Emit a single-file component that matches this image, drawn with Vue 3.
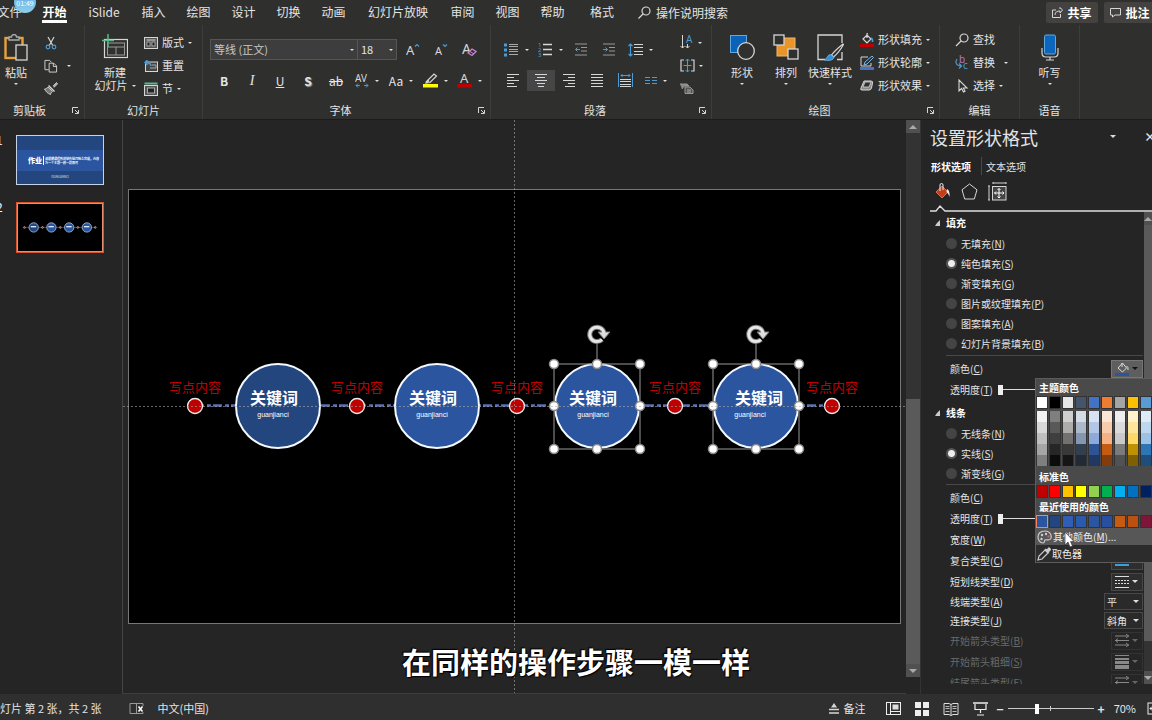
<script setup>
import { h, ref } from 'vue'

const W = '#d6d6d6'
const B = '#4a9bd6'
const glyph = (x, y, size, fill, s) => `<text x="${x}" y="${y}" font-size="${size}" fill="${fill}" font-family="Noto Sans, sans-serif">${s}</text>`
const icons = {
  paste: [24, 27, `<rect x="1.5" y="4" width="17" height="20" fill="none" stroke="#e8a23a" stroke-width="2.4"/><path d="M5 6V3h2.5a2.5 2.5 0 0 1 5 0H15v3z" fill="#30302f" stroke="#aaa" stroke-width="1.3"/><rect x="12" y="11" width="11" height="15" fill="#30302f" stroke="${W}" stroke-width="1.3"/>`],
  cut: [12, 14, `<path d="M3 1l5 9M9 1L4 10" stroke="${W}" fill="none" stroke-width="1.2"/><circle cx="3" cy="11" r="1.8" fill="none" stroke="${B}" stroke-width="1.2"/><circle cx="9" cy="11" r="1.8" fill="none" stroke="${B}" stroke-width="1.2"/>`],
  copy: [15, 14, `<path d="M5 11H1V1h5l2 2" fill="none" stroke="${W}"/><path d="M5.5 4h5l3 3v6.500h-8z" fill="#30302f" stroke="${W}"/><path d="M10 4v3.5h3.5" fill="none" stroke="${W}"/>`],
  brush: [14, 13, `<path d="M9 4l3.5-3.500 1.2 1.2L10 5.5" fill="#aaa" stroke="${W}" stroke-width=".8"/><path d="M5 3l6 6-1 1-6-6z" fill="${W}"/><path d="M4 5c-1 1-2 2-3.500 2 1 2 3 4.500 6 5.500 0-1 1-2 2-3z" fill="#777" stroke="${W}" stroke-width=".9"/>`],
  newslide: [26, 25, `<rect x="2.5" y="5.5" width="23" height="18" fill="#30302f" stroke="${W}" stroke-width="1.2"/><rect x="5.5" y="9" width="17" height="12" fill="none" stroke="#999"/><path d="M5.5 13h17M14 13v8" stroke="#999"/><path d="M0 6.5h12M6 0v13" stroke="#5fb58a" stroke-width="1.5"/>`],
  layout: [14, 12, `<rect x=".5" y=".5" width="13" height="11" fill="#555" stroke="${W}"/><path d="M2.5 3h9" stroke="${W}"/><rect x="3" y="5" width="3" height="4" fill="#222" stroke="#ccc" stroke-width=".7"/><rect x="8" y="5" width="3" height="4" fill="#222" stroke="#ccc" stroke-width=".7"/>`],
  reset: [14, 12, `<rect x="1.5" y="2" width="12" height="9.5" fill="#444" stroke="${W}"/><path d="M6 8h6V5H8" stroke="#aaa" fill="none"/><path d="M7 6C7 3 5 2.500 1 2.500M3.500 0L1 2.500 3.500 5" stroke="${B}" stroke-width="1.5" fill="none"/>`],
  section: [14, 14, `<path d="M.5 1.500h13" stroke="#5fb58a" stroke-width="2"/><rect x=".5" y="3.5" width="13" height="10" fill="#555" stroke="${W}"/><rect x="3.5" y="6" width="7" height="5" fill="#222" stroke="#aaa"/>`],
  grow: [15, 14, glyph(0, 12, 13, W, 'A') + `<path d="M9 3.500l2-2 2 2" stroke="${B}" fill="none" stroke-width="1.2"/>`],
  shrink: [15, 14, glyph(1, 12, 11, W, 'A') + `<path d="M9 1.500l2 2 2-2" stroke="${B}" fill="none" stroke-width="1.2"/>`],
  clear: [15, 15, glyph(0, 12, 14, W, 'A') + `<path d="M6 11l4-4 4 2.500-4 4z" fill="#30302f" stroke="#c583cf" stroke-width="1.3"/><path d="M8 9.500l4 2.500" stroke="#c583cf"/>`],
  spacing: [14, 15, glyph(0, 9, 10, W, 'AV') + `<path d="M1 12.500h4M9 12.500h4M3 10.500l-2 2 2 2M11 10.500l2 2-2 2" stroke="${B}" fill="none"/>`],
  marker: [15, 15, `<path d="M4 8l7-7 2.500 2L7 9.500 3 10z" fill="none" stroke="${W}" stroke-width="1.2"/><path d="M3 9.500l3-2" stroke="${W}" stroke-width="2"/><rect y="11" width="15" height="3.5" fill="#ff0"/>`],
  fcolor: [15, 15, glyph(3, 10, 13, W, 'A') + `<rect y="11" width="15" height="3.5" fill="#c00000"/>`],
  bullets: [15, 14, `<path d="M5 1.500h9M5 6.500h9M5 11.500h9M5 3.500h9M5 8.500h9" stroke="#aaa"/><path d="M0 2h3M0 7h3M0 12h3" stroke="${B}" stroke-width="3"/>`],
  numbers: [15, 15, `<path d="M5 2.500h9M5 7.500h9M5 12.500h9" stroke="${W}" stroke-width="1.3"/>` + glyph(0, 5, 6, B, '1') + glyph(0, 10, 6, B, '2') + glyph(0, 15, 6, B, '3')],
  dedent: [14, 13, `<path d="M1 1h12M7 4.500h6M7 8h6M1 12h12" stroke="#999"/><path d="M6 6.500H1.500M3.500 4.500l-2 2 2 2" stroke="#78909c" fill="none"/>`],
  indent: [14, 13, `<path d="M1 1h12M7 4.500h6M7 8h6M1 12h12" stroke="#999"/><path d="M1 6.500h4.500M3.500 4.500l2 2-2 2" stroke="#78909c" fill="none"/>`],
  lines: [15, 14, `<path d="M6 1.500h9M6 4.500h9M6 8.500h9M6 11.500h9" stroke="${W}"/><path d="M2.500 1v12M.5 3l2-2 2 2M.5 11l2 2 2-2" stroke="${B}" fill="none" stroke-width="1.2"/>`],
  left: [14, 13, `<path d="M1 .5h12M1 3.500h7M1 6.500h12M1 9.500h7M1 12.500h10" stroke="${W}"/>`],
  center: [14, 13, `<path d="M1 .5h12M3 3.500h8M1 6.500h12M3 9.500h8M4 12.500h6" stroke="${W}"/>`],
  right: [14, 13, `<path d="M1 .5h12M6 3.500h7M1 6.500h12M6 9.500h7M3 12.500h10" stroke="${W}"/>`],
  justify: [14, 13, `<path d="M1 .5h12M1 3.500h12M1 6.500h12M1 9.500h12M1 12.500h12" stroke="${W}"/>`],
  distribute: [15, 15, `<path d="M.5 0v14M14.500 0v14M3 2.500h9M4.500 1L3 2.500 4.500 4M10.500 1L12 2.500 10.500 4" stroke="${B}" fill="none"/><path d="M2 6.500h11M2 8.500h11M2 11.500h11M2 13.500h11" stroke="${W}"/>`],
  columns: [12, 10, `<path d="M0 1.500h5M7 1.500h5M0 4.500h5M7 4.500h5M0 7.500h5M7 7.500h5" stroke="${B}"/>`],
  textdir: [14, 15, `<path d="M2.500 0v13M.5 11l2 2 2-2M7.500 9v4M5.500 11l2 2 2-2" stroke="${W}" fill="none"/>` + glyph(6, 8, 10, B, 'A')],
  valign: [15, 13, `<path d="M4 1H1v11h3M11 1h3v11h-3" stroke="${W}" fill="none" stroke-width="1.2"/><path d="M7.500 0v13M3.500 6.500h8M5.500 2l2-2 2 2M5.500 11l2 2 2-2" stroke="${B}" fill="none"/>`],
  smart: [14, 11, `<path d="M0 1h7l2 2H4l-2 3" fill="#888" stroke="#999"/><path d="M5 4h5l3 3v3.500H5z" fill="#555" stroke="#999"/><path d="M7 7h4M7 9h4" stroke="#aaa"/>`],
  shapes: [26, 26, `<rect x="1.5" y="1.5" width="16" height="17" fill="#0a63b8" stroke="#5fa8e0"/><circle cx="17" cy="17" r="8.3" fill="#30302f" stroke="${W}" stroke-width="1.3"/>`],
  arrange: [26, 26, `<rect x="4" y="4" width="18" height="18" fill="#e8962a" stroke="#f2b768"/><rect x="1" y="1" width="10" height="10" fill="#30302f" stroke="${W}" stroke-width="1.3"/><rect x="15" y="15" width="10" height="10" fill="#30302f" stroke="${W}" stroke-width="1.3"/>`],
  quick: [27, 27, `<path d="M8 25.500H1V1h24v8M25 18v7.500h-5" fill="none" stroke="${W}" stroke-width="1.3"/><path d="M26 10c-5 4-10 9-11.500 11l2 2C19 21 24 15 26.500 10.500z" fill="#30302f" stroke="${W}" stroke-width="1.2"/><path d="M13.500 20.500c-3 0-3 4-6 5.500 4 1 9 .5 9.500-3z" fill="#2f8fd8" stroke="#7abdf0" stroke-width=".8"/>`],
  fill: [14, 14, `<path d="M3 6l4-4 4 4-4 4zM7 5V1q0-1 1-1" fill="none" stroke="${W}" stroke-width="1.2"/><path d="M11 5q2 1 1.500 4" stroke="${B}" fill="none" stroke-width="1.5"/><rect y="11" width="14" height="3" fill="#c00000"/>`],
  outline: [14, 14, `<path d="M8 1H1v9h10V7" fill="none" stroke="${W}"/><path d="M4 9l1-3 7-6 1.500 1.500L7 8z" fill="#30302f" stroke="#7ab8e8"/><rect y="11" width="14" height="3" fill="#4472c4"/>`],
  effects: [14, 11, `<path d="M4 1h7q2 0 1.500 2l-1 5q-.5 2-2.500 2H2q-2 0-1-2z" fill="#888" stroke="${W}"/><path d="M5 2h6L9 7H3z" fill="#30302f" stroke="${W}" stroke-width=".8"/>`],
  find: [14, 14, `<circle cx="9" cy="5" r="4" fill="none" stroke="${W}" stroke-width="1.2"/><path d="M6 8l-5 5" stroke="${W}" stroke-width="1.3"/>`],
  replace: [14, 15, glyph(4, 8, 10, '#b57ac5', 'b') + glyph(8, 14, 10, B, 'c') + `<path d="M2 4C0 7 1 11 6 11M4 8.500L6.500 11 4 13.500" stroke="${B}" fill="none" stroke-width="1.2"/>`],
  pick: [14, 14, `<path d="M4 1v11l2.500-2.500L8.500 13l1.500-.8L8.300 9H12z" fill="none" stroke="${W}" stroke-width="1.1"/>`],
  mic: [18, 27, `<rect x="3.5" y="1" width="11" height="19" rx="1.5" fill="#0c66bd" stroke="#5fa8e0"/><path d="M1 14v5q0 4 4 4h8q4 0 4-4v-5M9 23v3M5 26h8" fill="none" stroke="${W}" stroke-width="1.2"/>`],
  launch: [7, 7, `<path d="M.5 6V.5H6" stroke="${W}" fill="none"/><path d="M3 3l3 3M6.500 3v3.500H3" stroke="${W}" fill="none"/>`],
  search: [13, 13, `<circle cx="8" cy="5" r="4" fill="none" stroke="${W}" stroke-width="1.2"/><path d="M5 8l-4.500 4.500" stroke="${W}" stroke-width="1.3"/>`],
  share: [11, 11, `<path d="M4 3H.5v7.500h8V7" fill="none" stroke="${W}"/><path d="M3 8c0-3 2-4 5-4V6l2.500-3L8 .5V2" fill="none" stroke="${W}"/>`],
  comment: [11, 10, `<path d="M.5.5h10v6.500H5L2.500 9V7h-2z" fill="none" stroke="${W}"/>`],
  bucket: [17, 17, `<path d="M2 9l6-6 6 6-6 6z" fill="#c43e1c" stroke="#e8826a" stroke-width=".8"/><path d="M6 8V2q0-1.500 1.500-1.500T9 2v5" fill="none" stroke="#eee"/><path d="M13 6q3 1 2.500 8-.5-3-3-5z" fill="#eee"/>`],
  pentagon: [17, 17, `<path d="M8.500 1L16 6.800 13.300 16H3.700L1 6.800z" fill="none" stroke="${W}"/>`],
  size: [19, 19, `<path d="M1 4v14M0 4h2M0 18h2M5 1h13M5 0v2M18 0v2" stroke="${W}" fill="none"/><rect x="4.5" y="4.5" width="13.5" height="13.5" fill="#444" stroke="${W}"/><path d="M11 6.500v9.500M6.500 11h9.500M9.500 8L11 6.500 12.500 8M9.500 14.500L11 16l1.500-1.500M8 9.500L6.500 11 8 12.500M14.500 9.500L16 11l-1.500 1.500" stroke="#fff" fill="none"/>`],
  colorfill: [15, 14, `<path d="M3 6l4.500-5 4 5-4 4zM7 5V1" fill="none" stroke="#ddd"/><path d="M11.500 4q2 1 1.500 4" stroke="#ddd" fill="none"/><rect y="11" width="14" height="3" fill="#2a56a0"/>`],
  compound: [14, 12, `<path d="M0 2h14M0 6h14M0 10h14" stroke="#3aa0dc" stroke-width="2"/>`],
  dash: [14, 12, `<path d="M0 .5h14M0 11.500h14" stroke="#ddd"/><path d="M0 4.500h14M0 7.500h14" stroke="#ddd" stroke-dasharray="2 1"/>`],
  arrows: [14, 13, `<path d="M0 2h14M0 6.500h14M0 11h14M11 0l2.500 2L11 4M3 4.500L.5 6.500 3 8.500M11 9l2.500 2-2.500 2" stroke="#888" fill="none"/>`],
  weights: [14, 14, `<path d="M0 .5h14" stroke="#888"/><path d="M0 4h14" stroke="#888" stroke-width="2"/><path d="M0 7.500h14" stroke="#888" stroke-width="3"/><path d="M0 12h14" stroke="#888" stroke-width="4"/>`],
  palette: [15, 14, `<path d="M8 1C3 1 1 4 1 7s2 6 5 6c2 0 1-2 2-3s4 1 5.500-1S14 1 8 1z" fill="none" stroke="#ccc" stroke-width="1.2"/><circle cx="5" cy="5" r="1.2" fill="#ccc"/><circle cx="9" cy="4" r="1.2" fill="#ccc"/><circle cx="4.5" cy="9" r="1.2" fill="#ccc"/><circle cx="11.5" cy="6.5" r="1.2" fill="#c55"/>`],
  dropper: [14, 14, `<path d="M1 13l1-4 6-6 3 3-6 6z" fill="none" stroke="#ccc" stroke-width="1.2"/><path d="M8 2l4 4M9.500 3.500L12 1l1.500 1.500L11 5z" fill="#ccc" stroke="#ccc" stroke-width="1.3"/>`],
  proof: [15, 13, `<path d="M7.500 1.500v10M14 4V1.500H1v10h13V10" fill="none" stroke="#999"/><path d="M9.500 4.500l4 5M13.500 4.500l-4 5" stroke="#fff" stroke-width="1.6"/>`],
  notes: [12, 11, `<path d="M1 6.500h10M1 10h10" stroke="${W}" stroke-width="1.3"/><path d="M6 0l3 4.500H3z" fill="${W}"/>`],
  normal: [15, 13, `<rect x=".5" y=".5" width="14" height="12" fill="none" stroke="#eee"/><path d="M4.500 0v13M4.500 9.500h10" stroke="#eee"/><rect x="6.5" y="2.5" width="6" height="5" fill="#ddd"/>`],
  grid: [14, 14, `<path d="M0 0h6v6H0zM8 0h6v6H8zM0 8h6v6H0zM8 8h6v6H8z" fill="#eee"/>`],
  book: [16, 14, `<path d="M8 2.500v11M1 1.500h5l2 1 2-1h5v11h-5l-2 1-2-1H1z" fill="none" stroke="#ddd"/><path d="M2.500 4.500h4M2.500 6.500h4M2.500 9.500h4M9.500 4.500h4M9.500 6.500h4M9.500 9.500h4" stroke="#bbb"/>`],
  show: [15, 14, `<path d="M0 1h15" stroke="#eee" stroke-width="1.5"/><path d="M2 2v5.500h11V2M7.500 8v3M4 13h7" fill="none" stroke="#eee" stroke-width="1.2"/>`],
  fit: [14, 13, `<rect x="1" y="1" width="12" height="11" fill="none" stroke="#eee"/><path d="M3 6.500h8M5 4.500l-2 2 2 2" stroke="#eee" fill="none"/>`],
}
const Ico = (p) => {
  const [w, ht, body] = icons[p.n]
  return h('svg', { width: w, height: ht, viewBox: `0 0 ${w} ${ht}`, 'aria-hidden': 'true', innerHTML: body })
}
Ico.props = ['n']

const tabs = [
  { t: '文件' }, { t: '开始', on: true }, { t: 'iSlide', c: 'w54' }, { t: '插入' }, { t: '绘图' }, { t: '设计' },
  { t: '切换' }, { t: '动画' }, { t: '幻灯片放映', c: 'w84' }, { t: '审阅' }, { t: '视图' }, { t: '帮助' }, { t: '格式', c: 'w54' },
]
const nodes = [
  { x: 150, tx: 146, sx: 145, c: '#24467f' },
  { x: 309, tx: 305, sx: 304, c: '#2b559f' },
  { x: 469, tx: 465, sx: 465, c: '#2b559f', sel: true },
  { x: 628, tx: 631, sx: 622, c: '#2b559f', sel: true },
]
const dots = [67, 229, 389, 547, 704]
const handles = [[-43, -42], [0, -42], [43, -42], [-43, 0], [43, 0], [-43, 43], [0, 43], [43, 43]]

const fills = [['无填充', 'N'], ['纯色填充', 'S'], ['渐变填充', 'G'], ['图片或纹理填充', 'P'], ['图案填充', 'A'], ['幻灯片背景填充', 'B']]
const strokes = [['无线条', 'N'], ['实线', 'S'], ['渐变线', 'G']]
const fill = ref('S')
const stroke = ref('S')
const fillAlpha = ref(0)
const lineAlpha = ref(0)
const zoom = ref(34)

const theme = [
  ['#ffffff', '#f2f2f2', '#d8d8d8', '#bfbfbf', '#a5a5a5', '#7f7f7f'],
  ['#000000', '#7f7f7f', '#595959', '#3f3f3f', '#262626', '#0c0c0c'],
  ['#e7e6e6', '#d0cece', '#aeabab', '#757070', '#3a3838', '#171616'],
  ['#44546a', '#d6dce4', '#adb9ca', '#8496b0', '#323f4f', '#222a35'],
  ['#4472c4', '#d9e2f3', '#b4c6e7', '#8eaadb', '#2f5496', '#1f3864'],
  ['#ed7d31', '#fbe5d5', '#f7cbac', '#f4b183', '#c55a11', '#833c0b'],
  ['#a5a5a5', '#ededed', '#dbdbdb', '#c9c9c9', '#7b7b7b', '#525252'],
  ['#ffc000', '#fff2cc', '#fee599', '#ffd965', '#bf9000', '#7f6000'],
  ['#5b9bd5', '#deebf6', '#bdd7ee', '#9cc3e5', '#2e75b5', '#1e4e79'],
]
const standard = ['#c00000', '#ff0000', '#ffc000', '#ffff00', '#92d050', '#00b050', '#00b0f0', '#0070c0', '#002060']
const recent = ['#2b559f', '#24467f', '#2f5eb4', '#2b5aac', '#2b559f', '#2850a0', '#c55a11', '#bb5010', '#7d1638']
</script>

<template>
  <div class="app">
    <header class="tabs">
      <nav class="tablist">
        <button v-for="t in tabs" :key="t.t" class="tab" :class="[t.c, { on: t.on }]"><span>{{ t.t }}</span></button>
      </nav>
      <button class="tell"><Ico n="search" />操作说明搜索</button>
      <span class="grow"></span>
      <button class="pill"><Ico n="share" />共享</button>
      <button class="pill"><Ico n="comment" />批注</button>
      <span class="clock">01:49</span>
    </header>

    <section class="ribbon">
      <div class="group g-clip">
        <div class="body">
          <button class="big"><i><Ico n="paste" /></i>粘贴<b class="caret"></b></button>
          <div class="stack low">
            <button aria-label="剪切"><Ico n="cut" /></button>
            <button aria-label="复制"><Ico n="copy" /><b class="caret far"></b></button>
            <button aria-label="格式刷"><Ico n="brush" /></button>
          </div>
        </div>
        <footer><span>剪贴板</span><Ico n="launch" /></footer>
      </div>
      <div class="group g-slides">
        <div class="body">
          <button class="big"><i><Ico n="newslide" /></i>新建<span class="line">幻灯片<b class="caret"></b></span></button>
          <div class="stack low">
            <button><Ico n="layout" />版式<b class="caret"></b></button>
            <button><Ico n="reset" />重置</button>
            <button><Ico n="section" />节<b class="caret"></b></button>
          </div>
        </div>
        <footer><span>幻灯片</span></footer>
      </div>
      <div class="group g-font">
        <div class="tools">
          <div class="row">
            <span class="pick family"><select aria-label="字体"><option>等线 (正文)</option></select><b class="caret"></b></span>
            <span class="pick size"><select aria-label="字号"><option>18</option></select><b class="caret"></b></span>
            <button class="t" aria-label="增大字号"><Ico n="grow" /></button>
            <button class="t" aria-label="减小字号"><Ico n="shrink" /></button>
            <button class="t" aria-label="清除格式"><Ico n="clear" /></button>
          </div>
          <div class="row">
            <button class="t f-b">B</button>
            <button class="t f-i">I</button>
            <button class="t f-u">U</button>
            <button class="t f-s">S</button>
            <button class="t f-x">ab</button>
            <button class="t c" aria-label="字符间距"><Ico n="spacing" /><b class="caret"></b></button>
            <button class="t c">Aa<b class="caret"></b></button>
            <button class="t c" aria-label="突出显示"><Ico n="marker" /><b class="caret"></b></button>
            <button class="t c" aria-label="字体颜色"><Ico n="fcolor" /><b class="caret"></b></button>
          </div>
        </div>
        <footer><span>字体</span><Ico n="launch" /></footer>
      </div>
      <div class="group g-para">
        <div class="body">
          <div class="tools">
            <div class="row">
              <button class="t c" aria-label="项目符号"><Ico n="bullets" /><b class="caret"></b></button>
              <button class="t c" aria-label="编号"><Ico n="numbers" /><b class="caret"></b></button>
              <button class="t" aria-label="减少缩进"><Ico n="dedent" /></button>
              <button class="t" aria-label="增加缩进"><Ico n="indent" /></button>
              <button class="t c" aria-label="行距"><Ico n="lines" /><b class="caret"></b></button>
            </div>
            <div class="row">
              <button class="t" aria-label="左对齐"><Ico n="left" /></button>
              <button class="t on" aria-label="居中"><Ico n="center" /></button>
              <button class="t" aria-label="右对齐"><Ico n="right" /></button>
              <button class="t" aria-label="两端对齐"><Ico n="justify" /></button>
              <button class="t" aria-label="分散对齐"><Ico n="distribute" /></button>
              <button class="t c" aria-label="分栏"><Ico n="columns" /><b class="caret"></b></button>
            </div>
          </div>
          <div class="stack low">
            <button aria-label="文字方向"><Ico n="textdir" /><b class="caret"></b></button>
            <button aria-label="对齐文本"><Ico n="valign" /><b class="caret"></b></button>
            <button aria-label="SmartArt"><Ico n="smart" /></button>
          </div>
        </div>
        <footer><span>段落</span><Ico n="launch" /></footer>
      </div>
      <div class="group g-draw">
        <div class="body">
          <button class="big"><i><Ico n="shapes" /></i>形状<b class="caret"></b></button>
          <button class="big"><i><Ico n="arrange" /></i>排列<b class="caret"></b></button>
          <button class="big"><i><Ico n="quick" /></i>快速样式<b class="caret"></b></button>
          <div class="stack">
            <button><Ico n="fill" />形状填充<b class="caret"></b></button>
            <button><Ico n="outline" />形状轮廓<b class="caret"></b></button>
            <button><Ico n="effects" />形状效果<b class="caret"></b></button>
          </div>
        </div>
        <footer><span>绘图</span><Ico n="launch" /></footer>
      </div>
      <div class="group g-edit">
        <div class="body">
          <div class="stack">
            <button><Ico n="find" />查找</button>
            <button><Ico n="replace" />替换<b class="caret far"></b></button>
            <button><Ico n="pick" />选择<b class="caret"></b></button>
          </div>
        </div>
        <footer><span>编辑</span></footer>
      </div>
      <div class="group g-voice">
        <div class="body">
          <button class="big"><i><Ico n="mic" /></i>听写<b class="caret"></b></button>
        </div>
        <footer><span>语音</span></footer>
      </div>
    </section>

    <main class="work">
      <aside class="thumbs">
        <div class="thumb">
          <span class="num">1</span>
          <div class="mini cover">
            <div class="band">
              <b>作业</b>
              <p>请根据课程所讲制作技巧独立完成，内容<br />为一个主题一模一样即可</p>
            </div>
            <small>GUANJIANCI</small>
          </div>
        </div>
        <div class="thumb">
          <span class="num cur">2</span>
          <svg class="mini picked" viewBox="0 0 773 435">
            <rect width="773" height="435" fill="#000" />
            <path d="M67 217H704" stroke="#5a73b8" stroke-width="5" />
            <circle v-for="d in dots" :key="d" :cx="d" cy="217" r="8" fill="#c00000" stroke="#ddd" stroke-width="5" />
            <g v-for="n in nodes" :key="n.x">
              <circle :cx="n.x" cy="217" r="42" :fill="n.c" stroke="#a9c6ec" stroke-width="7" />
              <path :d="`M${n.x - 26} 210h48`" stroke="#dce8f8" stroke-width="12" />
            </g>
          </svg>
        </div>
      </aside>

      <section class="canvas">
        <svg class="slide" viewBox="0 0 773 435">
          <rect x=".5" y=".5" width="772" height="434" fill="#000" stroke="#777" />
          <path d="M67 216.500H704" stroke="#5870b4" stroke-width="2.500" stroke-dasharray="9 3 4 2" />
          <g v-for="d in dots" :key="d">
            <circle :cx="d" cy="217" r="7.500" fill="#c00000" stroke="#eee" stroke-width="1.300" />
            <text :x="d" y="203" class="note">写点内容</text>
          </g>
          <g v-for="n in nodes" :key="n.x">
            <circle :cx="n.x" cy="217" r="42" :fill="n.c" stroke="#f4f8ff" stroke-width="2" />
            <text :x="n.tx" y="215" class="key">关键词</text>
            <text :x="n.sx" y="228" class="sub">guanjianci</text>
            <g v-if="n.sel" :transform="`translate(${n.x} 217)`">
              <path d="M-43-42H43V43H-43zM0-42V-63" fill="none" stroke="#999" />
              <circle v-for="p in handles" :key="p.join()" :cx="p[0]" :cy="p[1]" r="4.500" fill="#fff" stroke="#8a8a8a" stroke-width="1.500" />
              <path d="M5-66.500A7.200 7.200 0 1 1 7-73" fill="none" stroke="#777" stroke-width="5" />
              <path d="M1-74H13L7-67z" fill="#ddd" stroke="#777" stroke-width="1" />
              <path d="M5-66.500A7.200 7.200 0 1 1 7-73" fill="none" stroke="#e6e6e6" stroke-width="3" />
            </g>
          </g>
        </svg>
        <span class="guide v"></span>
        <span class="guide h"></span>
      </section>

      <div class="vbar">
        <button aria-label="向上"><b class="up"></b></button>
        <span class="gap"></span>
        <span class="knob"></span>
        <button aria-label="向下"><b class="down"></b></button>
      </div>

      <aside class="pane">
        <div class="ptitle"><h2>设置形状格式</h2><b class="down"></b><button aria-label="关闭">×</button></div>
        <div class="ptabs"><button class="on">形状选项</button><button>文本选项</button></div>
        <div class="picons">
          <button aria-label="填充与线条"><Ico n="bucket" /></button>
          <button aria-label="效果"><Ico n="pentagon" /></button>
          <button aria-label="大小与属性"><Ico n="size" /></button>
        </div>
        <svg class="notch" width="100%" height="7"><path d="M0 6H6L10 1L15 6H900" fill="none" stroke="#ddd" stroke-width="1.300" /></svg>
        <div class="pscroll">
          <div class="props">
            <h3>填充</h3>
            <label v-for="f in fills" :key="f[1]" class="radio"><input v-model="fill" type="radio" name="fill" :value="f[1]" /><span>{{ f[0] }}(<u>{{ f[1] }}</u>)</span></label>
            <hr class="roomy" />
            <div class="field"><span>颜色(<u>C</u>)</span><button class="drop lit" aria-label="填充颜色"><Ico n="colorfill" /><b class="down"></b></button></div>
            <label class="field slide-row"><span>透明度(<u>T</u>)</span><input v-model="fillAlpha" type="range" min="0" max="100" /></label>
            <h3 class="next">线条</h3>
            <label v-for="f in strokes" :key="f[1]" class="radio"><input v-model="stroke" type="radio" name="stroke" :value="f[1]" /><span>{{ f[0] }}(<u>{{ f[1] }}</u>)</span></label>
            <hr />
            <div class="field"><span>颜色(<u>C</u>)</span></div>
            <label class="field slide-row"><span>透明度(<u>T</u>)</span><input v-model="lineAlpha" type="range" min="0" max="100" /></label>
            <div class="field"><span>宽度(<u>W</u>)</span></div>
            <div class="field"><span>复合类型(<u>C</u>)</span><button class="drop" aria-label="复合类型"><Ico n="compound" /><b class="down"></b></button></div>
            <div class="field"><span>短划线类型(<u>D</u>)</span><button class="drop" aria-label="短划线类型"><Ico n="dash" /><b class="down"></b></button></div>
            <label class="field tight"><span>线端类型(<u>A</u>)</span><span class="pick cap"><select><option>平</option></select><b class="down"></b></span></label>
            <label class="field tight"><span>连接类型(<u>J</u>)</span><span class="pick cap"><select><option>斜角</option></select><b class="down"></b></span></label>
            <div class="field off"><span>开始箭头类型(<u>B</u>)</span><button class="drop" disabled aria-label="开始箭头类型"><Ico n="arrows" /><b class="down"></b></button></div>
            <div class="field off"><span>开始箭头粗细(<u>S</u>)</span><button class="drop" disabled aria-label="开始箭头粗细"><Ico n="weights" /><b class="down"></b></button></div>
            <div class="field off"><span>结尾箭头类型(<u>E</u>)</span><button class="drop" disabled aria-label="结尾箭头类型"><Ico n="arrows" /><b class="down"></b></button></div>
          </div>
          <div class="vbar thin">
            <button aria-label="向上"><b class="up"></b></button>
            <span class="knob"></span>
            <span class="gap"></span>
            <button aria-label="向下"><b class="down"></b></button>
          </div>
        </div>

        <div class="colors">
          <h4>主题颜色</h4>
          <div class="swatches theme">
            <div v-for="(col, i) in theme" :key="i" class="col">
              <button v-for="c in col" :key="c" :aria-label="c" :style="{ background: c }"></button>
            </div>
          </div>
          <h4>标准色</h4>
          <div class="swatches"><button v-for="c in standard" :key="c" :aria-label="c" :style="{ background: c }"></button></div>
          <h4>最近使用的颜色</h4>
          <div class="swatches"><button v-for="(c, i) in recent" :key="i" :class="{ chosen: i === 0 }" :aria-label="c" :style="{ background: c }"></button></div>
          <button class="item hot"><Ico n="palette" /><span>其他颜色(<u>M</u>)...</span></button>
          <button class="item"><Ico n="dropper" />取色器</button>
          <svg class="pointer" width="11" height="17" viewBox="0 0 11 17"><path d="M1 1v13l3-3 2 5 2.500-1-2-4.500H10z" fill="#fff" stroke="#333" stroke-width=".7" /></svg>
        </div>
      </aside>
    </main>

    <footer class="status">
      <span class="count">幻灯片 第 2 张，共 2 张</span>
      <button aria-label="校对"><Ico n="proof" /></button>
      <span>中文(中国)</span>
      <span class="grow"></span>
      <button class="notes"><Ico n="notes" />备注</button>
      <div class="views">
        <button aria-label="普通视图"><Ico n="normal" /></button>
        <button aria-label="幻灯片浏览"><Ico n="grid" /></button>
        <button aria-label="阅读视图"><Ico n="book" /></button>
        <button aria-label="放映"><Ico n="show" /></button>
      </div>
      <div class="zoom">
        <button>−</button>
        <input v-model="zoom" type="range" min="0" max="100" aria-label="缩放" />
        <button>+</button>
        <span class="pct">70%</span>
        <button aria-label="适应窗口"><Ico n="fit" /></button>
      </div>
    </footer>

    <p class="caption">在同样的操作步骤一模一样</p>
  </div>
</template>

<style>
html, body { background: #252525; overflow: hidden; }
</style>

<style scoped>
.app { position: relative; display: flex; flex-direction: column; height: 100vh; overflow: hidden; background: #252525; color: #e4e4e4; font: 11px/13px "Noto Sans CJK SC", sans-serif; white-space: nowrap; }
.app *, .app *::before { box-sizing: border-box; }
button, select, input { font: inherit; color: inherit; background: none; border: 0; padding: 0; margin: 0; }
button { display: flex; align-items: center; }
svg { flex: none; display: block; }
h2, h3, h4, p { margin: 0; }
.grow { flex: 1; }
.caret { flex: none; width: 0; height: 0; border: 2px solid transparent; border-top-color: #e0e0e0; border-bottom: 0; }
.down, .up { flex: none; width: 0; height: 0; border: 4px solid transparent; border-top-color: #ddd; border-bottom: 0; }
.up { border-top: 0; border-bottom: 4px solid #aaa; }

.tabs { position: relative; flex: none; display: flex; align-items: center; height: 25px; background: #2f2f2e; font-size: 12px; }
.tablist { display: flex; margin-left: -13px; height: 25px; }
.tab { width: 45px; height: 25px; justify-content: center; align-items: flex-start; }
.tab span { padding: 4px 0 2px; height: 23px; line-height: 16px; }
.tab.on span { border-bottom: 3px solid #fff; font-weight: 700; color: #fff; }
.w54 { width: 54px; }
.w84 { width: 84px; }
.tell { gap: 5px; margin-left: 9px; }
.pill { gap: 4px; height: 21px; width: 52px; justify-content: center; margin-right: 6px; background: #444240; border-radius: 2px; font-weight: 700; color: #fff; }
.pill:last-of-type { margin-right: -4px; }
.clock { position: absolute; left: 14px; top: -9px; width: 22px; height: 22px; border-radius: 50%; background: linear-gradient(#5fa6e6, #8fd0ea); color: #fff; font-size: 7px; line-height: 24px; text-align: center; }

.ribbon { flex: none; display: flex; height: 95px; background: #2f2f2e; border-bottom: 1px solid #1c1c1c; }
.group { flex: none; display: flex; flex-direction: column; border-right: 1px solid #3d3d3d; }
.group footer { display: flex; align-items: center; height: 18px; padding-right: 5px; margin-top: auto; }
.group footer span { flex: 1; text-align: center; }
.g-clip { width: 98px; margin-left: -13px; }
.g-slides { width: 118px; }
.g-font { width: 288px; }
.g-para { width: 221px; }
.g-draw { width: 228px; }
.g-edit { width: 80px; }
.g-voice { width: 60px; }
.g-edit footer, .g-voice footer, .g-slides footer { padding-right: 0; }
.body { display: flex; }
.big { flex-direction: column; width: 44px; padding-top: 9px; height: 76px; }
.big i { display: flex; align-items: flex-start; height: 32px; }
.big > .caret { margin-top: 4px; }
.line { display: flex; align-items: center; gap: 4px; }
.g-clip .body { padding-left: 7px; }
.g-slides .body { padding-left: 8px; gap: 7px; }
.g-draw .body { padding-left: 8px; }
.g-draw .stack { padding-left: 8px; }
.g-edit .body { padding-left: 15px; }
.g-voice .body { justify-content: center; }
.stack { padding-top: 3px; }
.low { padding-top: 6px; }
.stack button { height: 23px; gap: 4px; }
.stack .far { margin-left: 5px; }
.g-clip .stack { padding-left: 6px; }
.g-clip .stack svg { width: 14px; }
.tools { display: flex; flex-direction: column; gap: 10px; padding-top: 14px; }
.g-font .tools { padding-left: 7px; }
.g-para .tools { padding-left: 8px; }
.g-para .tools + .stack { padding-left: 7px; }
.row { display: flex; height: 21px; }
.t { width: 28px; height: 21px; justify-content: center; font-size: 12px; }
.t.c { width: 34px; gap: 6px; }
.t.on { background: #464646; }
.f-b { font-weight: 700; }
.f-i { font-family: "Liberation Serif", serif; font-style: italic; font-size: 14px; }
.f-u { text-decoration: underline; }
.f-s { font-weight: 700; text-shadow: 1px 1px 1px #999; }
.f-x { text-decoration: line-through; }
.pick { position: relative; display: flex; align-items: center; border: 1px solid #555; background: #3d3d3d; }
.pick select { appearance: none; width: 100%; height: 100%; padding-left: 3px; outline: 0; }
.pick .caret, .pick .down { position: absolute; right: 3px; }
.family { width: 148px; color: #c8c8c8; }
.size { width: 39px; border-left: 0; margin-right: 2px; }

.work { flex: 1; min-height: 0; display: flex; }
.thumbs { flex: 0 0 123px; border-right: 1px solid #444; padding-top: 15px; display: flex; flex-direction: column; gap: 17px; }
.thumb { display: flex; align-items: flex-start; }
.num { width: 20px; margin-left: -4px; font-size: 12px; line-height: 10px; }
.cur { color: #fff; }
.mini { width: 88px; height: 50px; }
.cover { display: flex; flex-direction: column; align-items: center; border: 1px solid #c5d2e8; background: #24467f; padding-top: 14px; }
.band { display: flex; align-items: center; width: 100%; height: 21px; padding-left: 11px; background: #2b559f; color: #fff; }
.band b { font-size: 7px; line-height: 9px; padding-right: 1px; border-right: 1px solid #fff; font-weight: 900; }
.band p { padding-left: 1px; font-size: 3px; line-height: 4px; font-weight: 700; }
.cover small { font-size: 3px; line-height: 12px; }
.picked { height: 51px; border: 1px solid #d9532c; outline: 1px solid #e58f6f; outline-offset: -2px; background: #000; }

.canvas { position: relative; flex: 1; min-width: 0; display: flex; align-items: center; padding: 0 5px 1px; border-bottom: 1px solid #3e3e3e; }
.slide { flex: 1; width: 100%; height: auto; }
.note { font-size: 13px; fill: #c00000; text-anchor: middle; }
.key { font-size: 16px; font-weight: 700; fill: #fff; text-anchor: middle; }
.sub { font-family: "Liberation Sans", sans-serif; font-size: 7px; fill: #fff; text-anchor: middle; }
.guide { position: absolute; opacity: .6; }
.v { left: 50%; top: 0; bottom: 0; width: 1px; margin-left: -1px; background: repeating-linear-gradient(#aaa 0 2px, transparent 2px 4px); }
.h { top: 50%; left: 0; right: 0; height: 1px; margin-top: -1px; background: repeating-linear-gradient(90deg, #aaa 0 2px, transparent 2px 4px); }

.vbar { flex: 0 0 14px; display: flex; flex-direction: column; background: #333; border-bottom: 17px solid #252525; }
.vbar button { height: 13px; justify-content: center; background: #505050; }
.vbar .gap { flex: 1; }
.vbar .knob { flex: 1; background: #5a5a5a; }
.vbar .down { border-top-color: #aaa; }
.thin { flex-basis: 8px; border: 0; overflow: hidden; }
.thin .knob { flex: 14; }

.pane { position: relative; flex: 0 0 232px; display: flex; flex-direction: column; padding: 0 0 10px 9px; overflow: hidden; border-left: 1px solid #333; }
.ptitle { display: flex; align-items: center; height: 33px; }
.ptitle h2 { flex: 1; font: 400 18px/32px "Noto Sans CJK SC", sans-serif; }
.ptitle .down { border-width: 3px; border-bottom: 0; margin-right: 28px; }
.ptitle button { font-size: 12px; font-weight: 700; margin-right: -4px; }
.ptabs { display: flex; align-items: center; height: 26px; font-size: 10px; }
.ptabs button { height: 18px; padding: 0 10px 0 4px; border-left: 1px solid #484848; }
.ptabs .on { font-weight: 700; color: #fff; padding-left: 1px; border: 0; }
.picons { display: flex; align-items: center; gap: 10px; height: 25px; padding-left: 4px; }
.notch { height: 7px; margin-top: 1px; }
.pscroll { flex: 1; min-height: 0; display: flex; overflow: hidden; }
.props { flex: 1; padding-right: 1px; font-size: 10px; }
h3 { position: relative; height: 21px; padding-left: 16px; font-size: 10px; line-height: 21px; color: #fff; }
h3::before { content: ""; position: absolute; left: 5px; top: 8px; border: 3px solid transparent; border-right-color: #ccc; border-bottom-color: #ccc; border-left-width: 2px; }
.next { margin-top: 2px; }
.radio { display: flex; align-items: center; gap: 4px; height: 20px; padding-left: 16px; }
.radio input { appearance: none; width: 11px; height: 11px; border-radius: 50%; background: #444; }
.radio input:checked { background: radial-gradient(#eee 0 3px, #555 4px); }
u { text-underline-offset: 1px; }
hr { height: 1px; margin: 1px 0 2px 16px; border: 0; background: #484848; }
.roomy { margin-top: 2px; }
.field { display: flex; align-items: center; justify-content: space-between; height: 21px; padding-left: 20px; }
.slide-row { justify-content: flex-start; gap: 5px; }
.slide-row input { appearance: none; width: 70px; height: 11px; background: linear-gradient(#ddd, #ddd) center / 100% 1px no-repeat; }
.slide-row input::-webkit-slider-thumb { appearance: none; width: 5px; height: 10px; background: #eee; }
.tight { height: 19px; }
.drop { width: 32px; height: 18px; justify-content: space-between; padding: 0 4px 0 3px; border: 1px solid #484848; background: #2e2e2e; }
.drop .down { border-width: 3px; border-bottom: 0; }
.lit { background: #5e5e5e; border-color: #777; }
.lit .down { border-top-color: #111; }
.off { color: #6a6a6a; }
.off .drop { border-color: #333; background: #262626; }
.off .down { border-top-color: #666; }
.cap { width: 39px; height: 17px; background: #2a2a2a; border-color: #484848; }
.cap select { padding-left: 2px; }
.cap .down { border-width: 3px; border-bottom: 0; }

.colors { position: absolute; left: 114px; right: 0; top: 258px; background: #4a4a4a; border: 1px solid #5c5c5c; border-right: 0; font-size: 10px; color: #eee; overflow: hidden; }
h4 { height: 17px; padding-left: 3px; font-size: 10px; line-height: 17px; color: #fff; }
.swatches { display: flex; height: 13px; gap: 1px; overflow: hidden; }
.swatches button { flex: none; width: 12px; height: 13px; border: 1px solid #333; }
.theme { height: 72px; }
.col { flex: none; width: 12px; }
.theme .col button { height: 11px; border-width: 0 1px; }
.theme .col button:first-child { height: 13px; border-width: 1px; margin-bottom: 2px; }
.swatches .chosen { border-color: #f2855c; }
.item { width: 100%; height: 17px; padding-left: 1px; gap: 1px; background: #2c2c2c; font-size: 10px; }
.hot { background: #575757; }
.pointer { position: absolute; left: 28px; top: 152px; }

.status { flex: none; display: flex; align-items: center; height: 26px; padding-top: 3px; background: #2f2f2f; }
.count { margin-left: -11px; margin-right: 27px; }
.status > button + span { margin-left: 14px; }
.notes { gap: 3px; margin-right: 21px; }
.views { display: flex; gap: 14px; margin-right: 8px; }
.zoom { display: flex; align-items: center; gap: 4px; margin-right: -9px; }
.zoom button { font-size: 12px; font-weight: 700; }
.zoom input { appearance: none; width: 86px; height: 12px; background: linear-gradient(#ccc, #ccc) center / 1px 5px no-repeat, linear-gradient(#ccc, #ccc) center / 100% 1px no-repeat; }
.zoom input::-webkit-slider-thumb { appearance: none; width: 4px; height: 10px; background: #fff; }
.pct { margin: 0 7px 0 5px; }

.caption { position: absolute; left: 0; right: 0; bottom: 41px; text-align: center; font-size: 29px; line-height: 36px; font-weight: 700; color: #fff; text-shadow: 0 0 2px #000, 1px 1px 1px #000, -1px -1px 1px #000; pointer-events: none; }
</style>
